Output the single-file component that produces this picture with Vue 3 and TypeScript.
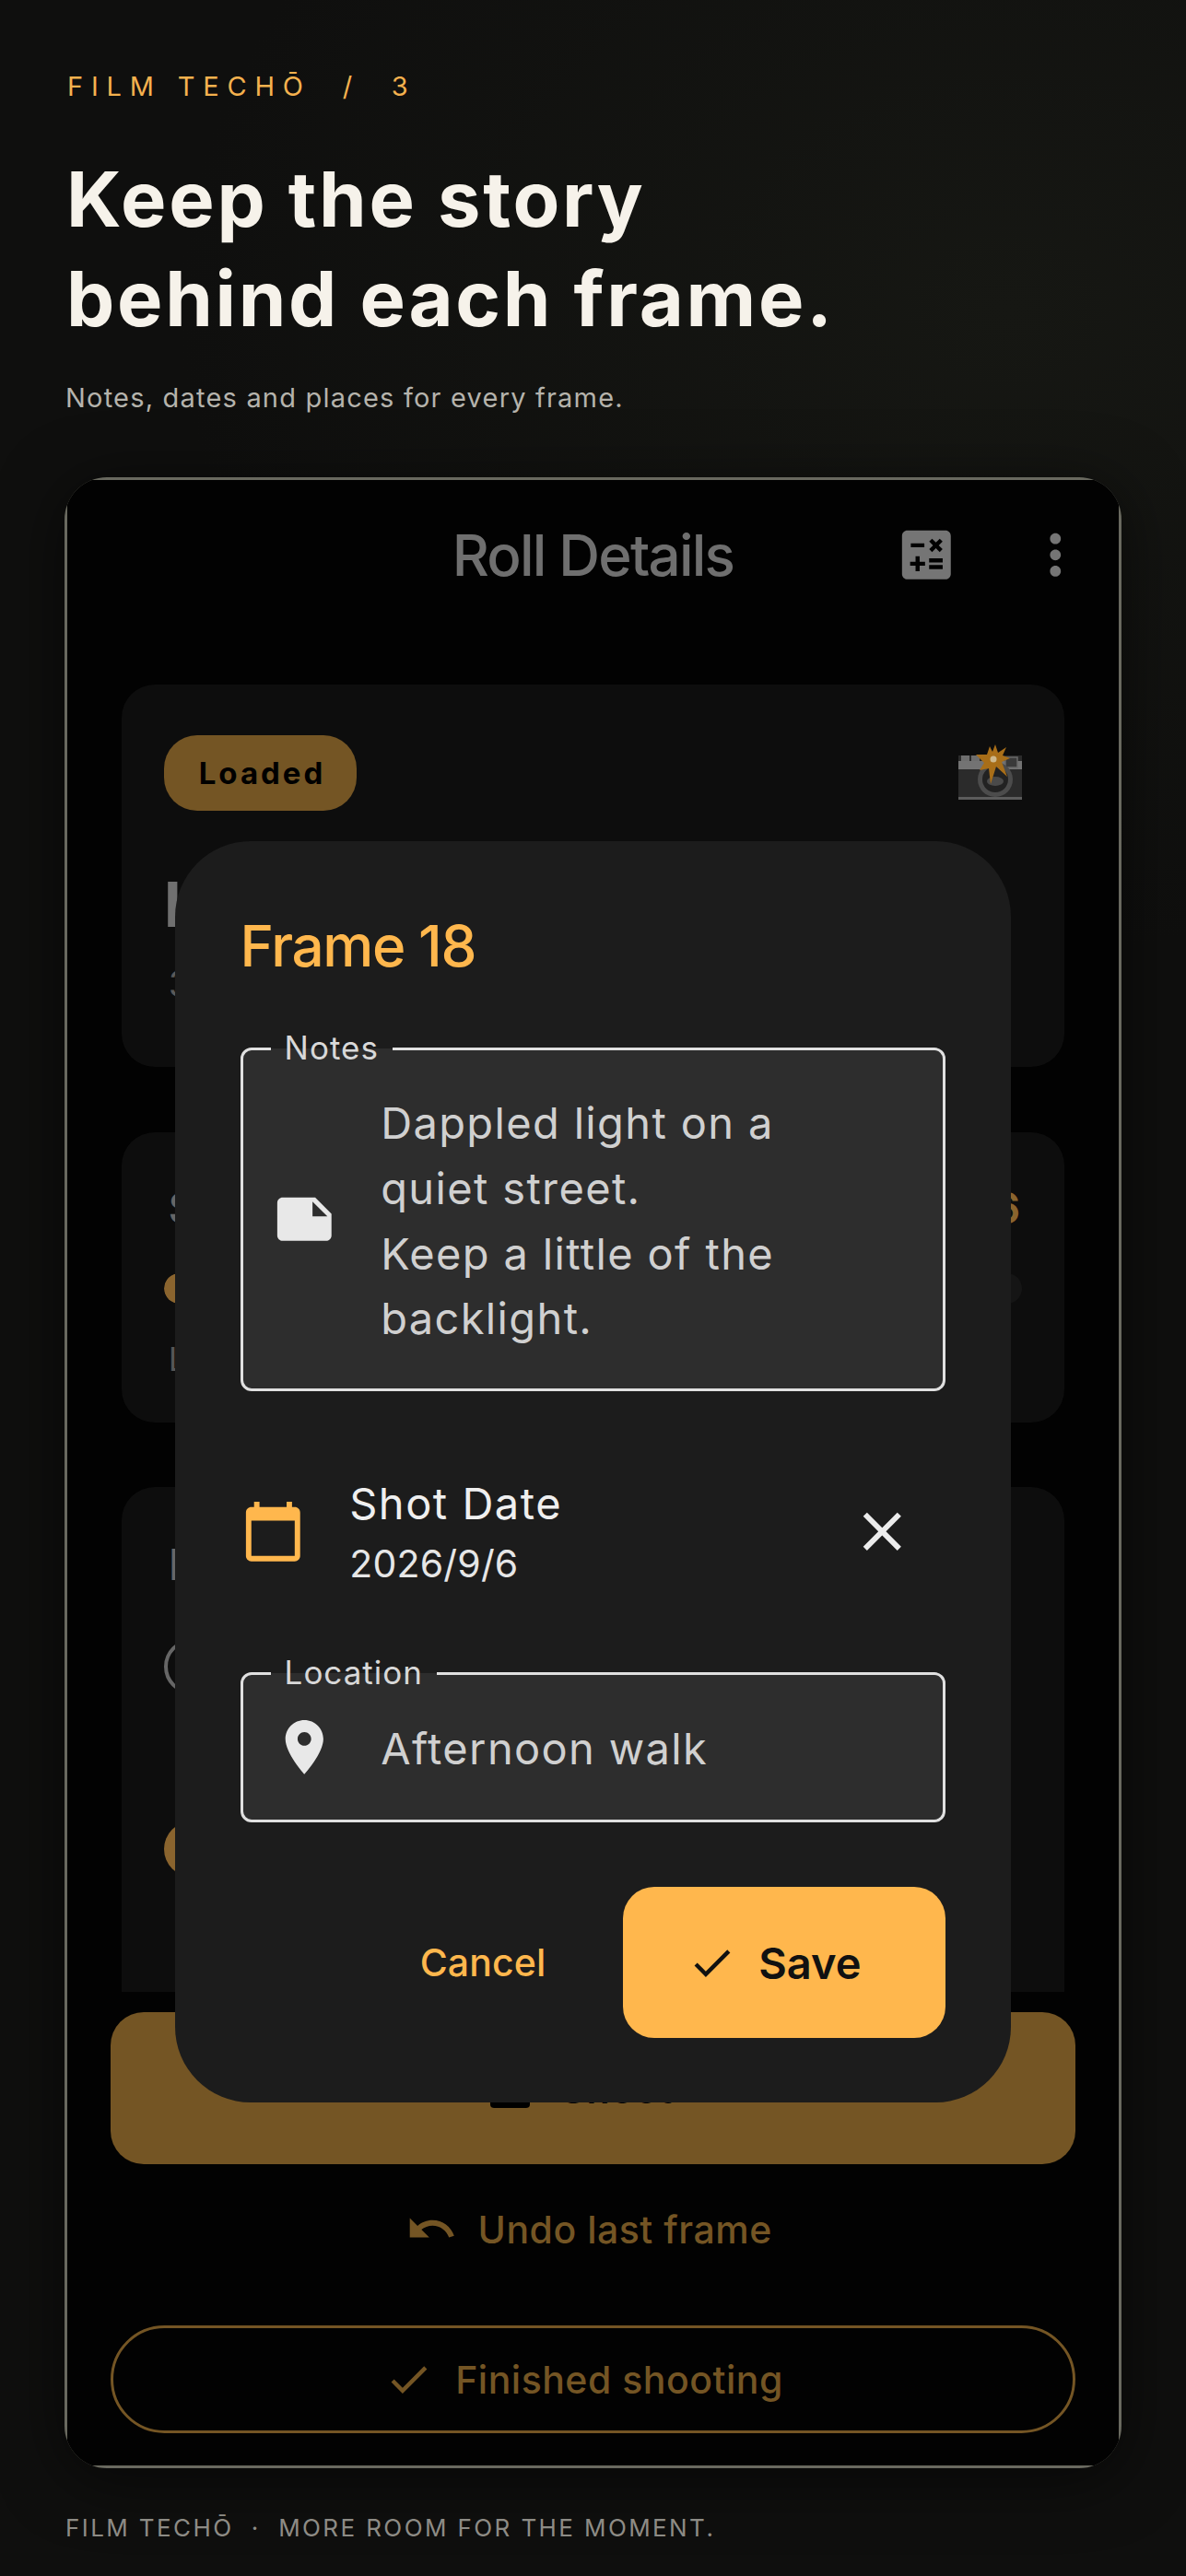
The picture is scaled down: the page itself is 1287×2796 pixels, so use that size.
<script setup lang="ts">
const notes: string[] = ['Dappled light on a', 'quiet street.', 'Keep a little of the', 'backlight.']
</script>

<template>
  <div class="page">
    <header class="intro">
      <p class="eyebrow">FILM TECHŌ&nbsp;&nbsp;/&nbsp;&nbsp;3</p>
      <h1 class="headline">Keep the story<br />behind each frame.</h1>
      <p class="lede">Notes, dates and places for every frame.</p>
    </header>

    <section class="phone">
      <div class="screen">
        <div class="topbar">
          <span></span>
          <h2 class="topbar-title">Roll Details</h2>
          <div class="topbar-actions">
            <svg class="icon70" viewBox="0 0 24 24"><path fill="#757575" d="M19 3H5c-1.1 0-2 .9-2 2v14c0 1.1.9 2 2 2h14c1.1 0 2-.9 2-2V5c0-1.1-.9-2-2-2zm-5.97 4.06L14.09 6l1.41 1.41L16.91 6l1.06 1.06-1.41 1.41 1.41 1.41-1.06 1.06-1.41-1.4-1.41 1.41-1.06-1.06 1.41-1.41-1.41-1.42zm-6.78.66h5v1.5h-5v-1.5zM11.5 16h-2v2H8v-2H6v-1.5h2v-2h1.5v2h2V16zm6.5 1.25h-5v-1.5h5v1.5zm0-2.5h-5v-1.5h5v1.5z" /></svg>
            <svg class="icon70" viewBox="0 0 24 24"><path fill="#757575" d="M12 8c1.1 0 2-.9 2-2s-.9-2-2-2-2 .9-2 2 .9 2 2 2zm0 2c-1.1 0-2 .9-2 2s.9 2 2 2 2-.9 2-2-.9-2-2-2zm0 6c-1.1 0-2 .9-2 2s.9 2 2 2 2-.9 2-2-.9-2-2-2z" /></svg>
          </div>
        </div>

        <div class="scroll">
          <article class="card card-roll">
            <div class="card-head">
              <span class="badge">Loaded</span>
              <svg class="camera" viewBox="0 0 69 60">
                <rect x="0" y="12" width="69" height="46" fill="#2b2b2b" />
                <rect x="3" y="12" width="9" height="6" fill="#6e6e6e" />
                <rect x="14" y="12" width="9" height="6" fill="#6e6e6e" />
                <rect x="0" y="18" width="69" height="9" fill="#737373" />
                <rect x="0" y="57" width="69" height="3" fill="#5c5c5c" />
                <rect x="51" y="14" width="13" height="11" fill="#3a3a3a" stroke="#6a6a6a" stroke-width="1.5" />
                <circle cx="40" cy="38" r="19" fill="#4c4c4c" />
                <circle cx="40" cy="38" r="14" fill="#222" />
                <ellipse cx="40" cy="40" rx="9" ry="5" fill="#4a4a4a" />
                <polygon fill="#a86e18" points="40,0 43,9 52,3 48,12 56,15 47,19 53,35 41,24 35,43 33,26 23,28 28,20 19,11 31,11 34,2 37,8" />
                <circle cx="38" cy="16" r="3.5" fill="#cdb88c" />
              </svg>
            </div>
            <h3 class="roll-name">Ilford HP5</h3>
            <p class="roll-meta">36 exposures</p>
          </article>

          <article class="card card-progress">
            <div class="progress-head">
              <span class="progress-label">Shots</span>
              <span class="progress-count">18 / 36</span>
            </div>
            <div class="track"><div class="fill"></div></div>
            <p class="progress-note">Last frame today</p>
          </article>

          <article class="card card-log">
            <p class="log-title">Log</p>
            <div class="ring"></div>
            <div class="dot"></div>
          </article>
        </div>

        <div class="actions">
          <button class="shoot">
            <svg class="shoot-icon" viewBox="0 0 43 40"><rect width="43" height="40" rx="4" fill="#000" /></svg>
            <span>Shoot</span>
          </button>
          <button class="undo">
            <svg class="undo-icon" viewBox="0 0 24 24"><path fill="#745524" d="M12.5 8c-2.65 0-5.05.99-6.9 2.6L2 7v9h9l-3.62-3.62c1.39-1.16 3.16-1.88 5.12-1.88 3.54 0 6.55 2.31 7.6 5.5l2.37-.78C21.08 11.03 17.15 8 12.5 8z" /></svg>
            <span>Undo last frame</span>
          </button>
          <button class="finish">
            <svg class="check" viewBox="0 0 24 24"><path fill="#745524" d="M9 16.17 4.83 12l-1.41 1.41L9 19 21 7l-1.41-1.41z" /></svg>
            <span>Finished shooting</span>
          </button>
        </div>

        <div class="dialog">
          <h2 class="dialog-title">Frame 18</h2>

          <div class="field field-notes">
            <span class="field-label">Notes</span>
            <svg class="icon70 field-icon" viewBox="0 0 24 24"><path fill="#e8e8e8" d="M22 10l-6-6H4c-1.1 0-2 .9-2 2v12.01c0 1.1.9 1.99 2 1.99l16-.01c1.1 0 2-.89 2-1.99v-8zm-7-4.5 5.5 5.5H15V5.5z" /></svg>
            <p class="field-text">
              <span v-for="line in notes" :key="line" class="note-line">{{ line }}</span>
            </p>
          </div>

          <div class="date-row">
            <svg class="icon70 date-icon" viewBox="0 0 24 24"><path fill="#ffb74d" d="M20 3h-1V1h-2v2H7V1H5v2H4c-1.1 0-2 .9-2 2v16c0 1.1.9 2 2 2h16c1.1 0 2-.9 2-2V5c0-1.1-.9-2-2-2zm0 18H4V8h16v13z" /></svg>
            <div class="date-text">
              <span class="date-label">Shot Date</span>
              <span class="date-value">2026/9/6</span>
            </div>
            <svg class="icon70 date-clear" viewBox="0 0 24 24"><path fill="#ececec" d="M19 6.41 17.59 5 12 10.59 6.41 5 5 6.41 10.59 12 5 17.59 6.41 19 12 13.41 17.59 19 19 17.59 13.41 12z" /></svg>
          </div>

          <div class="field field-location">
            <span class="field-label">Location</span>
            <svg class="icon70 field-icon" viewBox="0 0 24 24"><path fill="#e8e8e8" d="M12 2C8.13 2 5 5.13 5 9c0 5.25 7 13 7 13s7-7.75 7-13c0-3.87-3.13-7-7-7zm0 9.5c-1.38 0-2.5-1.12-2.5-2.5s1.12-2.5 2.5-2.5 2.5 1.12 2.5 2.5-1.12 2.5-2.5 2.5z" /></svg>
            <p class="field-text">Afternoon walk</p>
          </div>

          <div class="dialog-actions">
            <button class="cancel">Cancel</button>
            <button class="save">
              <svg class="check" viewBox="0 0 24 24"><path fill="#111" d="M9 16.17 4.83 12l-1.41 1.41L9 19 21 7l-1.41-1.41z" /></svg>
              <span>Save</span>
            </button>
          </div>
        </div>
      </div>
    </section>

    <footer class="foot">FILM TECHŌ&nbsp;&nbsp;·&nbsp;&nbsp;MORE ROOM FOR THE MOMENT.</footer>
  </div>
</template>

<style>
html,
body {
  margin: 0;
  background: #0f0f0e;
}
</style>

<style scoped>
* {
  box-sizing: border-box;
}
.page {
  width: 1287px;
  height: 2796px;
  padding: 76px 70px 0;
  overflow: hidden;
  font-family: Inter, "Noto Sans", sans-serif;
  background:
    radial-gradient(900px 700px at 85% 12%, #161713 0%, rgba(22, 23, 19, 0) 100%),
    #0f0f0e;
}
p,
h1,
h2,
h3 {
  margin: 0;
  font-weight: 400;
}
button {
  font-family: inherit;
  background: none;
  border: 0;
  padding: 0;
}
.eyebrow {
  padding-left: 3px;
  font-size: 29px;
  line-height: 36px;
  letter-spacing: 8.8px;
  color: #f4b14e;
}
.headline {
  margin-top: 50px;
  padding-left: 2px;
  font-size: 83px;
  line-height: 108px;
  font-weight: 700;
  letter-spacing: 2.7px;
  color: #f6f2ea;
}
.lede {
  margin-top: 34px;
  padding-left: 1px;
  font-size: 29px;
  line-height: 40px;
  letter-spacing: 1.2px;
  color: #b5b3ac;
}
.phone {
  margin-top: 66px;
  width: 1147px;
  height: 2161px;
  border-radius: 46px;
  overflow: hidden;
  padding: 3px;
  background: #69695f;
  box-shadow: 0 10px 70px rgba(0, 0, 0, 0.55);
}
.screen {
  position: relative;
  height: 100%;
  display: flex;
  flex-direction: column;
  background: #020202;
  border-radius: 18px;
  overflow: hidden;
}
.icon70 {
  display: block;
  width: 70.6px;
  height: 70.6px;
  flex: none;
}
.topbar {
  flex: none;
  height: 163px;
  display: grid;
  grid-template-columns: 1fr auto 1fr;
  align-items: center;
  padding: 0 33px;
}
.topbar-title {
  font-size: 62px;
  font-weight: 500;
  letter-spacing: -1.8px;
  color: #6f6f6f;
}
.topbar-actions {
  display: flex;
  justify-content: flex-end;
  gap: 70px;
}
.scroll {
  flex: none;
  height: 1419px;
  margin-top: 59px;
  padding: 0 58.7px;
  overflow: hidden;
  display: flex;
  flex-direction: column;
  gap: 70.6px;
}
.card {
  flex: none;
  background: #0d0d0d;
  border-radius: 36px;
  padding-left: 46px;
  padding-right: 46px;
}
.card-roll {
  height: 415px;
  padding-top: 55px;
}
.card-head {
  display: flex;
  justify-content: space-between;
  align-items: flex-start;
}
.badge {
  display: flex;
  align-items: center;
  height: 82px;
  padding: 0 34px 0 38px;
  border-radius: 36px;
  background: #745524;
  color: #000;
  font-size: 33px;
  font-weight: 700;
  letter-spacing: 3px;
}
.camera {
  display: block;
  width: 69px;
  height: 60px;
  margin-top: 10px;
}
.roll-name {
  margin-top: 62px;
  padding-left: 0;
  font-size: 68px;
  line-height: 78px;
  font-weight: 700;
  color: #707070;
}
.roll-meta {
  margin-top: 24px;
  padding-left: 5px;
  font-size: 40px;
  line-height: 48px;
  color: #5a5a5a;
}
.card-progress {
  height: 315px;
  padding-top: 54px;
}
.progress-head {
  display: flex;
  justify-content: space-between;
  padding: 0 2px 0 5px;
  font-size: 47px;
  line-height: 56px;
  font-weight: 600;
  color: #666;
}
.progress-count {
  color: #8a642e;
}
.track {
  height: 33px;
  margin-top: 43px;
  border-radius: 17px;
  background: #151515;
  overflow: hidden;
}
.fill {
  width: 50%;
  height: 100%;
  border-radius: 17px;
  background: #8a642e;
}
.progress-note {
  margin-top: 38px;
  padding-left: 5px;
  font-size: 36px;
  line-height: 44px;
  color: #565656;
}
.card-log {
  height: 700px;
  padding-top: 56px;
}
.log-title {
  padding-left: 5px;
  font-size: 47px;
  line-height: 56px;
  font-weight: 500;
  color: #666;
}
.ring {
  width: 60px;
  height: 60px;
  margin-top: 53px;
  border: 4px solid #666;
  border-radius: 50%;
}
.dot {
  width: 60px;
  height: 60px;
  margin-top: 138px;
  border-radius: 50%;
  background: #8a642e;
}
.actions {
  flex: 1;
  display: flex;
  flex-direction: column;
  align-items: stretch;
  padding: 22px 47px 0;
}
.shoot {
  display: flex;
  align-items: center;
  justify-content: center;
  gap: 34px;
  height: 165px;
  padding: 3px 25px 0 0;
  border-radius: 36px;
  background: #745524;
  color: #000;
  font-size: 41px;
  font-weight: 600;
  letter-spacing: 1px;
}
.shoot-icon {
  display: block;
  width: 43px;
  height: 40px;
}
.undo {
  display: flex;
  align-items: center;
  justify-content: center;
  gap: 22px;
  height: 141px;
  margin-top: 0;
  color: #745524;
  font-size: 41px;
  font-weight: 500;
  letter-spacing: 0.5px;
}
.undo-icon {
  display: block;
  width: 56.4px;
  height: 56.4px;
  margin-left: -9px;
}
.finish {
  display: flex;
  align-items: center;
  justify-content: center;
  gap: 24px;
  height: 117px;
  margin-top: 34px;
  padding-right: 20px;
  border: 3px solid #745524;
  border-radius: 59px;
  color: #745524;
  font-size: 41px;
  font-weight: 500;
  letter-spacing: 0.5px;
}
.check {
  display: block;
  width: 53px;
  height: 53px;
  flex: none;
}
.dialog {
  position: absolute;
  left: 117px;
  top: 392px;
  width: 907px;
  padding: 67px 70.6px 70px;
  border-radius: 82px;
  background: #1c1c1c;
}
.dialog-title {
  font-size: 62px;
  line-height: 93px;
  font-weight: 500;
  letter-spacing: -1.4px;
  color: #ffb74d;
}
.field {
  position: relative;
  display: flex;
  align-items: center;
  border: 3px solid #e0e0e0;
  border-radius: 12px;
  background: #2d2d2d;
  padding-left: 31px;
}
.field-notes {
  height: 373px;
  margin-top: 64px;
}
.field-location {
  height: 163px;
  margin-top: 82px;
}
.field-label {
  position: absolute;
  top: -25px;
  left: 30px;
  padding: 0 15px;
  font-size: 35px;
  line-height: 44px;
  letter-spacing: 1px;
  color: #d8d8d8;
  background: linear-gradient(#1c1c1c 0 23px, #2d2d2d 23px 100%);
  background-size: 100% 44px;
}
.field-icon {
  margin-right: 48px;
}
.field-text {
  padding-top: 4px;
  font-size: 47px;
  line-height: 70.6px;
  letter-spacing: 1.35px;
  color: #d0d0d0;
}
.note-line {
  display: block;
}
.date-row {
  display: flex;
  align-items: center;
  height: 141px;
  margin-top: 82px;
}
.date-icon {
  margin-right: 48px;
}
.date-text {
  flex: 1;
  display: flex;
  flex-direction: column;
  gap: 6px;
}
.date-label {
  font-size: 47px;
  line-height: 62px;
  letter-spacing: 1.5px;
  color: #efefef;
}
.date-value {
  font-size: 41px;
  line-height: 56px;
  letter-spacing: 0.2px;
  color: #e6e6e6;
}
.date-clear {
  margin-right: 34px;
}
.dialog-actions {
  display: flex;
  justify-content: flex-end;
  align-items: center;
  margin-top: 70px;
}
.cancel {
  margin-right: 84px;
  color: #ffb74d;
  font-size: 41px;
  font-weight: 500;
  letter-spacing: 0.1px;
}
.save {
  display: flex;
  align-items: center;
  justify-content: center;
  gap: 24px;
  width: 350px;
  height: 164px;
  padding-right: 22px;
  border-radius: 34px;
  background: #ffb74d;
  color: #111;
  font-size: 47px;
  font-weight: 600;
}
.foot {
  margin-top: 49px;
  padding-left: 1px;
  font-size: 26px;
  line-height: 32px;
  letter-spacing: 2.4px;
  color: #8d8b85;
}
</style>
